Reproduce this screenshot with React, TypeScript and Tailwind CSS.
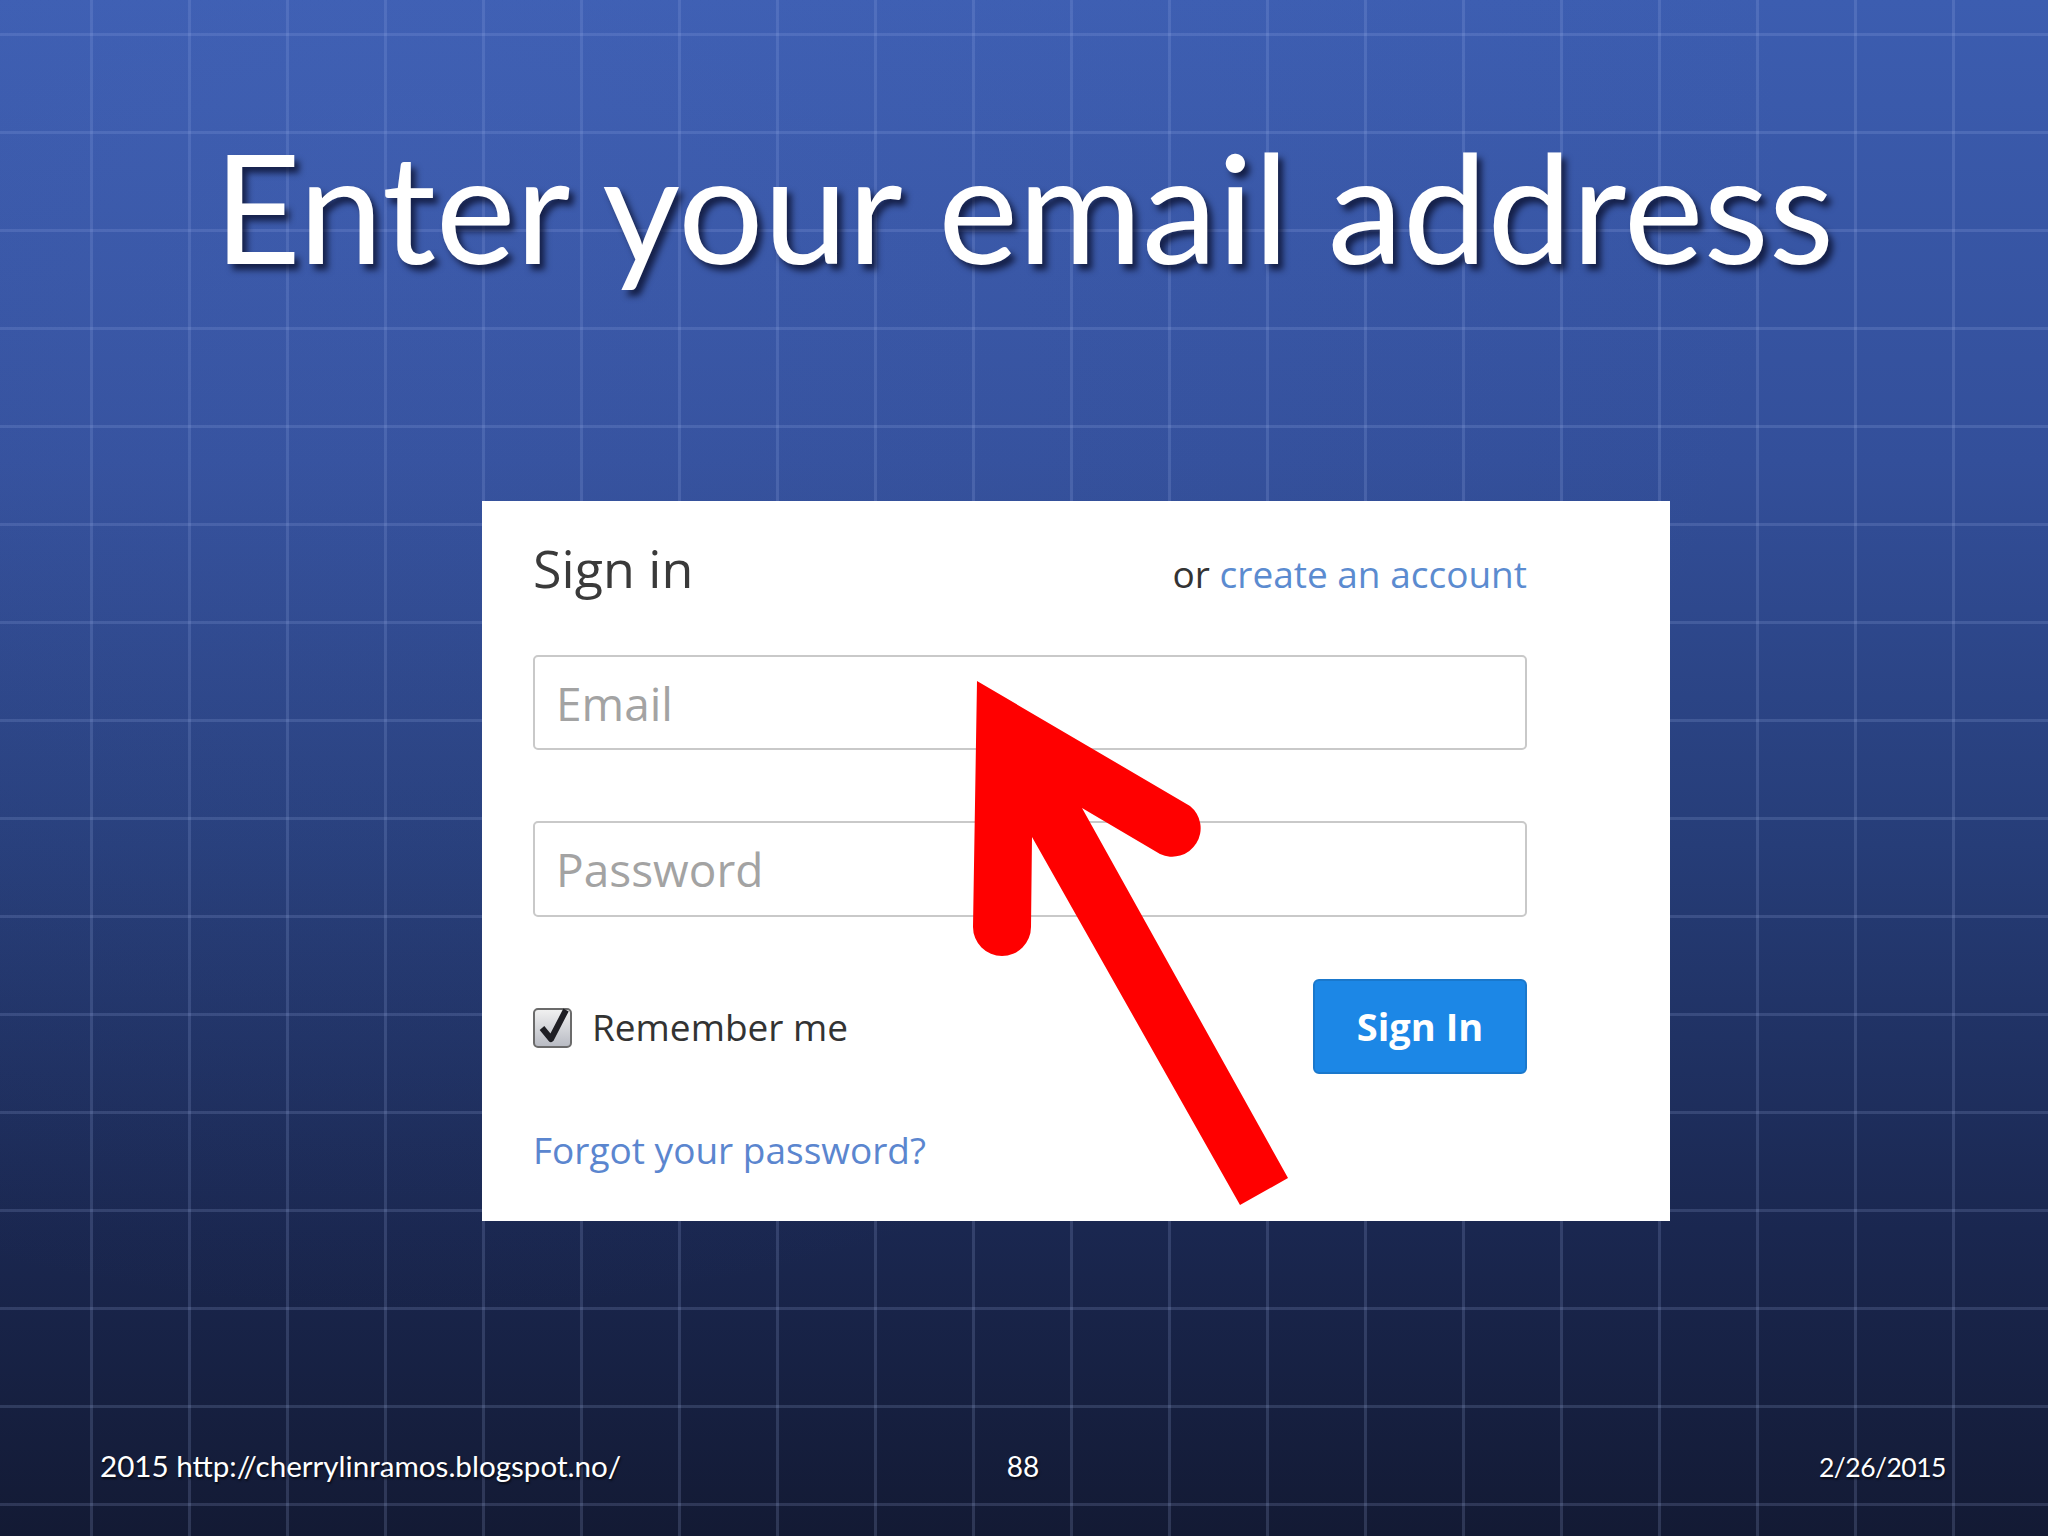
import React from "react";

function Arrow() {
  return (
    <svg
      className="absolute left-0 top-0 pointer-events-none"
      width="2048"
      height="1536"
      viewBox="0 0 2048 1536"
    >
      <path
        d="M977 681 L1190 806 A28.5 28.5 0 0 1 1160 854 L1082 808 L1288 1178 L1240 1205 L1032 837 L1031 927 A29 29 0 0 1 973 927 Z"
        fill="#ff0000"
      />
    </svg>
  );
}

function CheckBox() {
  return (
    <div className="relative w-[40px] h-[42px]">
      <div className="absolute left-0 top-[2px] w-[39px] h-[40px] rounded-[5px] border-2 border-[#6b6b6b] bg-[linear-gradient(to_bottom,#f0f0f0,#b9bcc4)]" />
      <svg className="absolute left-0 top-0" width="44" height="44" viewBox="0 0 44 44">
        <path d="M9 22 L18 33 L33 4" fill="none" stroke="#1f1f24" strokeWidth="6" strokeLinejoin="round" />
      </svg>
    </div>
  );
}

export default function App() {
  return (
    <div className="relative w-[2048px] h-[1536px] overflow-hidden [background-image:linear-gradient(to_right,rgba(175,195,245,0.17)_3px,transparent_3px),linear-gradient(to_bottom,rgba(175,195,245,0.17)_3px,transparent_3px),linear-gradient(to_bottom,#3c5db0_0%,#334f9a_30%,#263d78_55%,#1a2750_80%,#131a34_100%)] [background-size:98px_98px,98px_98px,100%_100%] [background-position:90px_33px,90px_33px,0_0]">
      <div className="absolute inset-0 bg-[radial-gradient(ellipse_at_20%_10%,rgba(90,120,210,0.15),transparent_60%)]" />
      <div className="relative flex flex-col font-['Lato',sans-serif]">
        <h1 className="pt-[130px] text-center text-white text-[151px] leading-none [text-shadow:5px_6px_6px_rgba(0,0,20,0.65)]">
          Enter your email address
        </h1>

        <div className="mt-[220px] ml-[482px] w-[1188px] h-[720px] bg-white pl-[51px] pr-[143px] pt-[41px] font-['Open_Sans',sans-serif]">
          <div className="flex items-baseline justify-between">
            <span className="text-[52px] leading-none text-[#3a3a3a]">Sign in</span>
            <span className="text-[37px] leading-none text-[#333]">
              or <span className="text-[#5b8bd0]">create an account</span>
            </span>
          </div>

          <input
            placeholder="Email"
            className="mt-[61px] block w-full h-[95px] border-2 border-[#c9c9c9] rounded-[5px] px-[21px] text-[46px] outline-none placeholder:text-[#a3a3a3]"
          />
          <input
            placeholder="Password"
            className="mt-[71px] block w-full h-[96px] border-2 border-[#c9c9c9] rounded-[5px] px-[21px] text-[46px] outline-none placeholder:text-[#a3a3a3]"
          />

          <div className="mt-[62px] h-[95px] flex items-center justify-between">
            <div className="flex items-center gap-[19px]">
              <CheckBox />
              <span className="text-[37px] leading-none text-[#333]">Remember me</span>
            </div>
            <button className="w-[214px] h-[95px] rounded-[6px] bg-[#1c87e6] border-2 border-[#1a78cc] text-white font-bold text-[38px]">
              Sign In
            </button>
          </div>

          <div className="mt-[57px] text-[37px] leading-none text-[#5b86cf]">Forgot your password?</div>
        </div>

        <div className="mt-[230px] grid grid-cols-3 items-baseline pl-[100px] pr-[102px] leading-none text-white [text-shadow:1px_2px_2px_rgba(0,0,0,0.6)]">
          <span className="text-[29.6px]">2015 http://cherrylinramos.blogspot.no/</span>
          <span className="text-center text-[28px]">88</span>
          <span className="text-right text-[26.5px] tracking-[-0.5px]">2/26/2015</span>
        </div>
      </div>
      <Arrow />
    </div>
  );
}
